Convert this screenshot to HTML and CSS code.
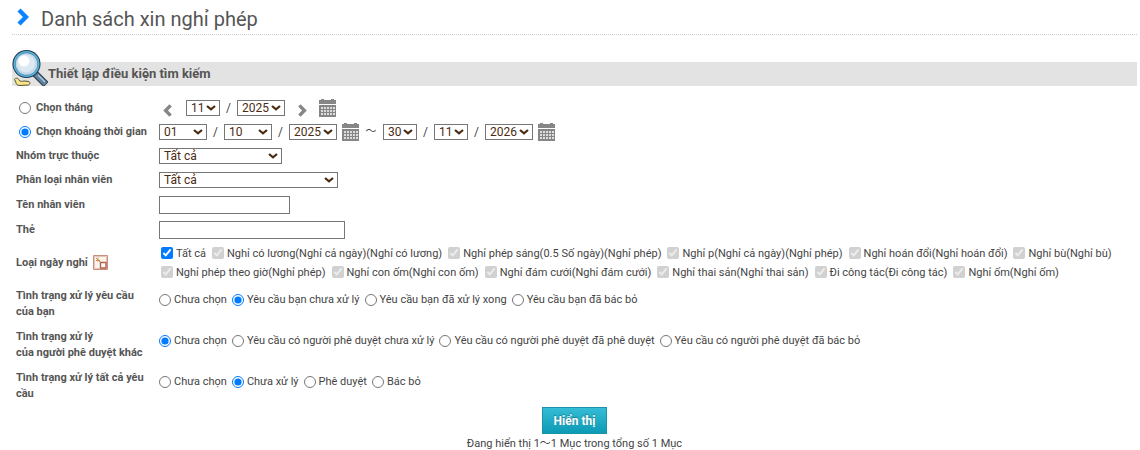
FILE: index.html
```html
<!DOCTYPE html>
<html lang="vi">
<head>
    <meta charset="UTF-8">
    <meta name="viewport" content="width=device-width, initial-scale=1.0">
    <title>Danh sách xin nghỉ phép</title>
    <link rel="stylesheet" href="styles.css">
</head>
<body>
    <!-- Icon dùng chung -->
    <svg class="sprite" aria-hidden="true">
        <symbol id="icon-calendar" viewBox="0 0 17 18">
            <path fill="#868686" d="M2 0h3v1h7V0h3v1h2v4H0V1h2zM0 6h17v12H0z"/>
            <path fill="none" stroke="#ddd" stroke-width="2" stroke-dasharray="2 1" d="M2 9h14M2 12h14M2 15h14"/>
        </symbol>
        <symbol id="icon-chevron" viewBox="0 0 9 13">
            <path fill="none" stroke="currentColor" stroke-width="3.4" d="M1.4 1.4l5 5.1-5 5.1"/>
        </symbol>
    </svg>

    <div class="container">
        <h1 class="page-title">
            <svg class="title-arrow" viewBox="0 0 12 18"><path fill="none" stroke="#0a84ff" stroke-width="4.4" d="M2 2l7 7-7 7"/></svg>
            Danh sách xin nghỉ phép
        </h1>

        <h2 class="section-title">
            <svg class="search-icon" viewBox="0 0 36 36">
                <path fill="#f8e48a" stroke="#5b5230" d="M2.500 29.500c1-2 3.500-1.500 4.500.5 1.500 1.800 3 1.500 5 1l5 .5c1.500 1 1 3-.5 3.500L8 35.500c-3 0-4-1.500-4-3z"/>
                <path stroke="#2d3b4a" stroke-width="7" d="M22.500 23l11.500 11.500"/>
                <path stroke="#5f82a0" stroke-width="4.800" d="M23 23.500l10.500 10.500"/>
                <path stroke="#b9cede" stroke-width="1.200" d="M26 25l7 7"/>
                <circle cx="14.500" cy="14" r="14" fill="#22384a"/>
                <circle cx="14.500" cy="14" r="13" fill="#5bb4dd"/>
                <circle cx="14.500" cy="14" r="11.400" fill="#3a80a8"/>
                <circle cx="14.500" cy="14" r="10.800" fill="#c3d9e7"/>
                <circle cx="14" cy="13.500" r="9" fill="#dde9f2"/>
                <circle cx="12" cy="11" r="5.500" fill="#fff"/>
            </svg>
            Thiết lập điều kiện tìm kiếm
        </h2>

        <form class="search-form">
            <!-- Thời gian -->
            <div class="form-row">
                <label class="row-label"><input type="radio" name="period" class="period-radio">Chọn tháng</label>
                <div class="dates">
                    <button type="button" class="icon-btn prev" aria-label="Tháng trước"><svg class="chevron"><use href="#icon-chevron"/></svg></button>
                    <select class="w-short" aria-label="Tháng"><option>11</option></select>
                    <span class="slash">/</span>
                    <select class="w-year" aria-label="Năm"><option>2025</option></select>
                    <button type="button" class="icon-btn next" aria-label="Tháng sau"><svg class="chevron"><use href="#icon-chevron"/></svg></button>
                    <button type="button" class="icon-btn calendar" aria-label="Lịch"><svg><use href="#icon-calendar"/></svg></button>
                </div>
            </div>
            <div class="form-row">
                <label class="row-label"><input type="radio" name="period" class="period-radio" checked>Chọn khoảng thời gian</label>
                <div class="dates">
                    <select class="w-year" aria-label="Từ ngày"><option>01</option></select>
                    <span class="slash">/</span>
                    <select class="w-year" aria-label="Từ tháng"><option>10</option></select>
                    <span class="slash">/</span>
                    <select class="w-year" aria-label="Từ năm"><option>2025</option></select>
                    <button type="button" class="icon-btn calendar" aria-label="Lịch từ ngày"><svg><use href="#icon-calendar"/></svg></button>
                    <span class="tilde">～</span>
                    <select class="w-short" aria-label="Đến ngày"><option>30</option></select>
                    <span class="slash">/</span>
                    <select class="w-short" aria-label="Đến tháng"><option>11</option></select>
                    <span class="slash">/</span>
                    <select class="w-year" aria-label="Đến năm"><option>2026</option></select>
                    <button type="button" class="icon-btn calendar" aria-label="Lịch đến ngày"><svg><use href="#icon-calendar"/></svg></button>
                </div>
            </div>

            <!-- Nhân viên -->
            <div class="form-row">
                <label class="row-label" for="group">Nhóm trực thuộc</label>
                <div><select id="group" class="w-group"><option>Tất cả</option></select></div>
            </div>
            <div class="form-row">
                <label class="row-label" for="empType">Phân loại nhân viên</label>
                <div><select id="empType" class="w-type"><option>Tất cả</option></select></div>
            </div>
            <div class="form-row text-row">
                <label class="row-label" for="empName">Tên nhân viên</label>
                <div><input type="text" id="empName" class="w-name"></div>
            </div>
            <div class="form-row text-row">
                <label class="row-label" for="tag">Thẻ</label>
                <div><input type="text" id="tag" class="w-tag"></div>
            </div>

            <!-- Loại ngày nghỉ -->
            <div class="form-row leave-row">
                <div class="row-label">
                    Loại ngày nghỉ
                    <button type="button" class="icon-btn picker" aria-label="Chọn loại ngày nghỉ">
                        <svg viewBox="0 0 15 15">
                            <path fill="#fbf3ee" stroke="#c98f7c" d="M.5.5h14v14H.5z"/>
                            <path fill="none" stroke="#e6c3b6" d="M1.500 1.500h12v12h-12z"/>
                            <path fill="none" stroke="#d08a4c" d="M3 3l4 4M5 2.500v4M3 5.500h4"/>
                            <path fill="#fff" stroke="#b4604c" stroke-width="1.400" d="M7.500 7.500h5.500V13H7.500z"/>
                        </svg>
                    </button>
                </div>
                <div class="checks">
                    <label><input type="checkbox" checked>Tất cả</label>
                    <label><input type="checkbox" checked disabled>Nghỉ có lương(Nghỉ cả ngày)(Nghỉ có lương)</label>
                    <label><input type="checkbox" checked disabled>Nghỉ phép sáng(0.5 Số ngày)(Nghỉ phép)</label>
                    <label><input type="checkbox" checked disabled>Nghỉ p(Nghỉ cả ngày)(Nghỉ phép)</label>
                    <label><input type="checkbox" checked disabled>Nghỉ hoán đổi(Nghỉ hoán đổi)</label>
                    <label><input type="checkbox" checked disabled>Nghỉ bù(Nghỉ bù)</label>
                    <label><input type="checkbox" checked disabled>Nghỉ phép theo giờ(Nghỉ phép)</label>
                    <label><input type="checkbox" checked disabled>Nghỉ con ốm(Nghỉ con ốm)</label>
                    <label><input type="checkbox" checked disabled>Nghỉ đám cưới(Nghỉ đám cưới)</label>
                    <label><input type="checkbox" checked disabled>Nghỉ thai sản(Nghỉ thai sản)</label>
                    <label><input type="checkbox" checked disabled>Đi công tác(Đi công tác)</label>
                    <label><input type="checkbox" checked disabled>Nghỉ ốm(Nghỉ ốm)</label>
                </div>
            </div>

            <!-- Tình trạng xử lý -->
            <div class="form-row status-row">
                <div class="row-label">Tình trạng xử lý yêu cầu của bạn</div>
                <div class="radios">
                    <label><input type="radio" name="mine">Chưa chọn</label>
                    <label><input type="radio" name="mine" checked>Yêu cầu bạn chưa xử lý</label>
                    <label><input type="radio" name="mine">Yêu cầu bạn đã xử lý xong</label>
                    <label><input type="radio" name="mine">Yêu cầu bạn đã bác bỏ</label>
                </div>
            </div>
            <div class="form-row status-row">
                <div class="row-label">Tình trạng xử lý<br>của người phê duyệt khác</div>
                <div class="radios">
                    <label><input type="radio" name="others" checked>Chưa chọn</label>
                    <label><input type="radio" name="others">Yêu cầu có người phê duyệt chưa xử lý</label>
                    <label><input type="radio" name="others">Yêu cầu có người phê duyệt đã phê duyệt</label>
                    <label><input type="radio" name="others">Yêu cầu có người phê duyệt đã bác bỏ</label>
                </div>
            </div>
            <div class="form-row status-row">
                <div class="row-label">Tình trạng xử lý tất cả yêu cầu</div>
                <div class="radios">
                    <label><input type="radio" name="all">Chưa chọn</label>
                    <label><input type="radio" name="all" checked>Chưa xử lý</label>
                    <label><input type="radio" name="all">Phê duyệt</label>
                    <label><input type="radio" name="all">Bác bỏ</label>
                </div>
            </div>

            <div class="actions">
                <button type="submit" class="btn-primary">Hiển thị</button>
            </div>
        </form>

        <p class="result-count">Đang hiển thị 1～1 Mục trong tổng số 1 Mục</p>
    </div>
</body>
</html>
```

FILE: styles.css
```css
:root {
    --text: #444;
    --label: #555;
    --field: #4a2c12;
    --border: #767676;
    --accent: #007aff;
}

* {
    box-sizing: border-box;
    margin: 0;
    padding: 0;
}

body {
    background: white;
    color: var(--text);
    font-family: Roboto, 'Noto Sans CJK JP', sans-serif;
    font-size: 11px;
    line-height: 16px;
}

.sprite {
    display: none;
}

.container {
    padding: 0 3px 0 12px;
}

/* Tiêu đề */
.page-title {
    display: flex;
    align-items: center;
    gap: 12px;
    height: 35px;
    padding: 4px 0 0 5px;
    border-bottom: 1px dotted #ccc;
    color: #555;
    font-size: 20px;
    font-weight: 400;
}

.title-arrow {
    width: 12px;
    height: 18px;
    margin-bottom: 4px;
}

.section-title {
    position: relative;
    margin-top: 27px;
    padding-left: 36px;
    background: #e3e3e3;
    color: #555;
    font-size: 13px;
    line-height: 24px;
}

.search-icon {
    position: absolute;
    left: 0;
    bottom: 0;
    width: 36px;
    height: 36px;
}

/* Form */
.search-form {
    padding-top: 10px;
}

.form-row {
    display: grid;
    grid-template-columns: 131px 1fr;
    column-gap: 12px;
    align-items: center;
    min-height: 24px;
    padding-left: 4px;
}

.text-row {
    min-height: 25px;
}

.leave-row {
    min-height: 41px;
}

.status-row {
    min-height: 41px;
}

.row-label {
    display: flex;
    align-items: center;
    color: var(--label);
    font-weight: 700;
}

label {
    white-space: nowrap;
}

.form-row > div {
    display: flex;
    align-items: center;
}

input[type="radio"],
input[type="checkbox"] {
    flex: none;
    width: 12px;
    height: 12px;
    accent-color: var(--accent);
}

.period-radio {
    margin: 0 5px 0 3px;
}

select,
input[type="text"] {
    border: 1px solid var(--border);
    border-radius: 0;
    background: white;
    color: var(--field);
    font-family: inherit;
    font-size: 12px;
}

select {
    appearance: none;
    height: 16px;
    padding-left: 4px;
    background: white url("data:image/svg+xml,%3Csvg xmlns='http://www.w3.org/2000/svg' width='10' height='6'%3E%3Cpath d='M1 1l4 3.400L9 1' fill='none' stroke='%234a2c12' stroke-width='2.200'/%3E%3C/svg%3E") no-repeat right 3px center;
    line-height: 14px;
}

input[type="text"] {
    height: 18px;
    padding: 0 2px;
}

.w-short { width: 34px; }
.w-year { width: 48px; }
.w-group { width: 123px; }
.w-type { width: 179px; }
.w-name { width: 131px; }
.w-tag { width: 186px; }

.slash {
    width: 17px;
    font-size: 12px;
    text-align: center;
}

.tilde {
    width: 24px;
    text-align: center;
}

.icon-btn {
    display: flex;
    border: none;
    background: none;
    color: #868686;
    cursor: pointer;
}

.chevron {
    width: 9px;
    height: 13px;
}

.prev {
    margin: 4px 14px 0 4px;
}

.prev .chevron {
    transform: scaleX(-1);
}

.next {
    margin: 4px 7px 0 13px;
}

.calendar {
    margin-left: 5px;
}

.calendar svg {
    width: 17px;
    height: 18px;
}

.picker {
    margin-left: 5px;
}

.picker svg {
    width: 15px;
    height: 15px;
}

/* Danh sách lựa chọn */
.form-row > .checks,
.form-row > .radios {
    flex-wrap: wrap;
    column-gap: 6px;
}

.form-row > .radios {
    column-gap: 5px;
    padding-bottom: 8px;
}

.checks label,
.radios label {
    display: flex;
    align-items: center;
    gap: 3px;
    line-height: 19px;
}

.checks {
    padding-left: 2px;
}

/* Nút hiển thị */
.actions {
    padding-top: 1px;
    text-align: center;
}

.btn-primary {
    height: 27px;
    padding: 0 11px;
    border: 1px solid #1a93ab;
    background: linear-gradient(#35bcd6, #0c9ab4);
    color: white;
    font-family: inherit;
    font-size: 12px;
    font-weight: 700;
    text-shadow: 0 -1px 1px rgba(0, 0, 0, 0.3);
    vertical-align: top;
    cursor: pointer;
}

.result-count {
    margin-top: 2px;
    text-align: center;
}
```
